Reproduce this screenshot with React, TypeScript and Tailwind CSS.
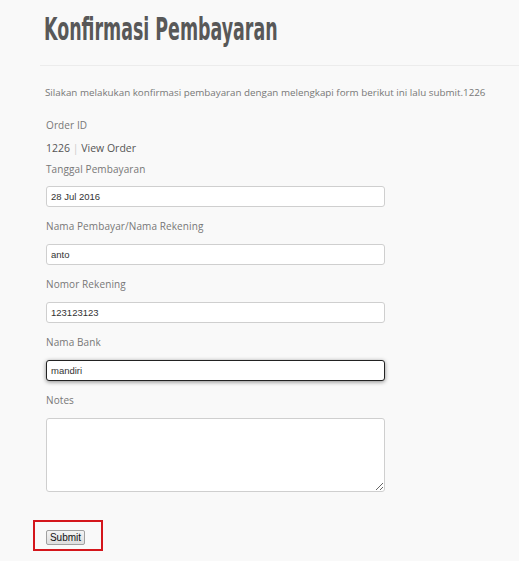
import React from "react";

const labelCls = "h-[16px] leading-[16px] text-[10px] text-[#777] tracking-[0.1px]";
const inputCls =
  "block w-[339px] h-[21px] px-[4px] rounded-[3px] border border-[#cfcfcf] bg-white text-[9.5px] text-[#333] outline-none";

export default function App() {
  return (
    <div
      className="min-h-[561px] w-[519px] bg-[#f9f9f9] overflow-hidden"
      style={{ fontFamily: '"Open Sans", "Noto Sans", sans-serif' }}
    >
      <div className="pt-[9px] pl-[44px]">
        <h1
          className="text-[32px] leading-[40px] text-[#585858] font-bold origin-left scale-x-[0.605] whitespace-nowrap"
          style={{ fontFamily: '"DejaVu Sans Condensed", "Liberation Sans Narrow", sans-serif' }}
        >
          Konfirmasi Pembayaran
        </h1>
      </div>
      <div className="mt-[16px] ml-[40px] border-t border-[#ececec]" />
      <div className="pl-[45px]">
        <p className="mt-[20px] h-[14px] leading-[14px] text-[9.8px] text-[#777] whitespace-nowrap">
          Silakan melakukan konfirmasi pembayaran dengan melengkapi form berikut ini lalu submit.1226
        </p>
        <div className="mt-[17px] pl-[1px]">
          <div className={labelCls}>Order ID</div>
          <div className="mt-[7px] h-[16px] leading-[16px] text-[10.5px] text-[#555]">
            1226 <span className="text-[#ccc]">|</span> <span>View Order</span>
          </div>
          <div className={`mt-[5px] ${labelCls}`}>Tanggal Pembayaran</div>
          <input
            className={`mt-[9px] ${inputCls}`}
            style={{ fontFamily: '"Liberation Sans", Arial, sans-serif' }}
            defaultValue="28 Jul 2016"
          />
          <div className={`mt-[11px] ${labelCls}`}>Nama Pembayar/Nama Rekening</div>
          <input
            className={`mt-[10px] ${inputCls}`}
            style={{ fontFamily: '"Liberation Sans", Arial, sans-serif' }}
            defaultValue="anto"
          />
          <div className={`mt-[11px] ${labelCls}`}>Nomor Rekening</div>
          <input
            className={`mt-[10px] ${inputCls}`}
            style={{ fontFamily: '"Liberation Sans", Arial, sans-serif' }}
            defaultValue="123123123"
          />
          <div className={`mt-[11px] ${labelCls}`}>Nama Bank</div>
          <input
            className="mt-[10px] block w-[339px] h-[21px] px-[4px] rounded-[3px] border border-[#222] bg-white text-[9.5px] text-[#333] outline-none shadow-[0_1px_4px_rgba(0,0,0,0.45)]"
            style={{ fontFamily: '"Liberation Sans", Arial, sans-serif' }}
            defaultValue="mandiri"
          />
          <div className={`mt-[11px] ${labelCls}`}>Notes</div>
          <textarea className="mt-[10px] block w-[339px] h-[74px] rounded-[3px] border border-[#cfcfcf] bg-white outline-none resize" />
        </div>
      </div>
      <div className="mt-[28px] ml-[33px] w-[70px] h-[31px] border-2 border-[#d4161c] pl-[11px] pt-[8px] flex items-start">
        <button
          className="block h-[15px] w-[39px] p-0 text-[10px] leading-[13px] text-[#111] rounded-[2px] border border-[#a0a0a0] bg-gradient-to-b from-[#f4f4f4] to-[#dedede]"
          style={{ fontFamily: '"Liberation Sans", Arial, sans-serif' }}
        >
          Submit
        </button>
      </div>
    </div>
  );
}
